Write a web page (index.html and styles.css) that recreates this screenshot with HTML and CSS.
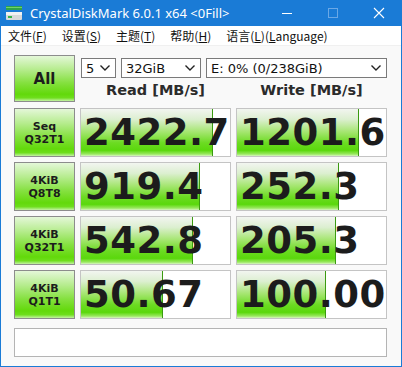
FILE: index.html
```html
<!DOCTYPE html>
<html lang="zh-CN">
<head>
    <meta charset="UTF-8">
    <title>CrystalDiskMark 6.0.1 x64 &lt;0Fill&gt;</title>
    <link rel="stylesheet" href="styles.css">
</head>
<body>
    <div class="window">
        <div class="titlebar">
            <svg class="app-icon" width="18" height="18" viewBox="0 0 18 18">
                <rect x="1" y="2" width="16" height="4" fill="#2fa34a"/>
                <rect x="1" y="3" width="16" height="1" fill="#6fd36a"/>
                <rect x="1" y="8" width="16" height="8" rx="1" fill="#d9d9d9"/>
                <rect x="1" y="8" width="16" height="3" fill="#f2f2f2"/>
                <rect x="3" y="12" width="4" height="2" fill="#39b54a"/>
            </svg>
            <span class="title">CrystalDiskMark 6.0.1 x64 &lt;0Fill&gt;</span>
            <div class="controls">
                <svg width="46" height="26" viewBox="0 0 46 26"><rect x="18" y="13" width="10" height="1" fill="#fff"/></svg>
                <svg width="46" height="26" viewBox="0 0 46 26"><rect x="18.5" y="8.5" width="9" height="9" fill="none" stroke="#6aa8e6"/></svg>
                <svg width="46" height="26" viewBox="0 0 46 26"><path d="M18 8 L28 18 M28 8 L18 18" stroke="#fff" stroke-width="1.1"/></svg>
            </div>
        </div>

        <div class="menubar">
            <span>文件(<u>F</u>)</span>
            <span>设置(<u>S</u>)</span>
            <span>主题(<u>T</u>)</span>
            <span>帮助(<u>H</u>)</span>
            <span>语言(<u>L</u>)(<u>L</u>anguage)</span>
        </div>

        <div class="content">
            <div class="top">
                <div class="btn all">All</div>
                <div class="top-right">
                    <div class="selects">
                        <div class="select s-count">5<svg width="10" height="6" viewBox="0 0 10 6"><path d="M0.5 0.5 L5 5 L9.5 0.5" fill="none" stroke="#222" stroke-width="1.4"/></svg></div>
                        <div class="select s-size">32GiB<svg width="10" height="6" viewBox="0 0 10 6"><path d="M0.5 0.5 L5 5 L9.5 0.5" fill="none" stroke="#222" stroke-width="1.4"/></svg></div>
                        <div class="select s-drive">E: 0% (0/238GiB)<svg width="10" height="6" viewBox="0 0 10 6"><path d="M0.5 0.5 L5 5 L9.5 0.5" fill="none" stroke="#222" stroke-width="1.4"/></svg></div>
                    </div>
                    <div class="heads">
                        <div>Read [MB/s]</div>
                        <div>Write [MB/s]</div>
                    </div>
                </div>
            </div>

            <div class="results">
                <div class="btn label">Seq<br>Q32T1</div>
                <div class="cell"><div class="bar" style="width: 131px"></div><span class="num">2422.7</span></div>
                <div class="cell"><div class="bar" style="width: 121px"></div><span class="num">1201.6</span></div>

                <div class="btn label">4KiB<br>Q8T8</div>
                <div class="cell"><div class="bar" style="width: 118px"></div><span class="num">919.4</span></div>
                <div class="cell"><div class="bar" style="width: 101px"></div><span class="num">252.3</span></div>

                <div class="btn label">4KiB<br>Q32T1</div>
                <div class="cell"><div class="bar" style="width: 111px"></div><span class="num">542.8</span></div>
                <div class="cell"><div class="bar" style="width: 98px"></div><span class="num">205.3</span></div>

                <div class="btn label">4KiB<br>Q1T1</div>
                <div class="cell"><div class="bar" style="width: 81px"></div><span class="num">50.67</span></div>
                <div class="cell"><div class="bar" style="width: 88px"></div><span class="num">100.00</span></div>
            </div>

            <div class="comment"></div>
        </div>
    </div>
</body>
</html>
```

FILE: styles.css
```css
body {
    margin: 0;
    font-family: "DejaVu Sans", sans-serif;
    background-color: #fff;
}
.window {
    width: 402px;
    height: 367px;
    box-sizing: border-box;
    border: 1px solid #1a7bd6;
    border-top: none;
    background-color: #f9f9f9;
    overflow: hidden;
}
.titlebar {
    height: 26px;
    margin: 0 -1px;
    background-color: #1a7bd6;
    display: flex;
    align-items: center;
    color: #fff;
}
.app-icon {
    margin-left: 5px;
    margin-right: 7px;
}
.title {
    font-family: "Noto Sans", sans-serif;
    font-size: 13px;
    flex: 1;
}
.controls {
    display: flex;
}
.controls svg {
    display: block;
}
.menubar {
    height: 19px;
    background-color: #fff;
    border-bottom: 1px solid #f0f0f0;
    display: flex;
    align-items: center;
    gap: 15px;
    padding-left: 7px;
    font-family: "Noto Sans CJK SC", sans-serif;
    font-size: 12px;
    color: #111;
}
.content {
    padding: 9px 0 0 13px;
}
.top {
    display: flex;
    gap: 5px;
}
.btn {
    box-sizing: border-box;
    border: 1px solid #8c8c8c;
    background: linear-gradient(to bottom, #e4f7d8 0%, #b6ec8e 30%, #84e03e 60%, #62d90a 85%, #6ede1c 93%, #c4f2a4 100%);
    color: #1c1c1c;
    font-weight: bold;
    text-align: center;
    display: flex;
    align-items: center;
    justify-content: center;
}
.all {
    width: 61px;
    height: 47px;
    font-size: 15px;
}
.top-right {
    width: 307px;
}
.selects {
    display: flex;
    gap: 5px;
    margin: 3px 0 0 1px;
}
.select {
    box-sizing: border-box;
    height: 20px;
    border: 1px solid #7a7a7a;
    background-color: #fff;
    font-size: 13px;
    color: #111;
    display: flex;
    align-items: center;
    justify-content: space-between;
    padding: 0 5px 0 4px;
}
.s-count { width: 35px; }
.s-size { width: 80px; }
.s-drive { width: 181px; }
.heads {
    display: flex;
    gap: 5px;
    height: 24px;
}
.heads div {
    width: 151px;
    text-align: center;
    font-weight: bold;
    font-size: 14.5px;
    color: #2b2b2b;
    line-height: 24px;
}
.results {
    margin-top: 6px;
    display: grid;
    grid-template-columns: 61px 151px 151px;
    grid-auto-rows: 49px;
    gap: 5px;
}
.label {
    font-size: 11px;
    line-height: 13px;
}
.cell {
    position: relative;
    box-sizing: border-box;
    border: 1px solid #c4c4c4;
    background-color: #fff;
    overflow: hidden;
}
.bar {
    position: absolute;
    left: 0;
    top: 0;
    bottom: 0;
    border-right: 1px solid #3a9a10;
    background: linear-gradient(to bottom, #f2f5f0 0%, #dcefd0 22%, #a6e672 48%, #6cdb22 72%, #5ad80c 88%, #9ae860 96%, #d8f6c4 100%);
}
.num {
    position: relative;
    display: block;
    padding-left: 3px;
    font-size: 37px;
    font-weight: bold;
    letter-spacing: 0.5px;
    line-height: 47px;
    color: #1c1c1c;
    white-space: nowrap;
}
.comment {
    box-sizing: border-box;
    margin-top: 9px;
    width: 373px;
    height: 29px;
    border: 1px solid #b4b4b4;
    background-color: #fff;
}
```
